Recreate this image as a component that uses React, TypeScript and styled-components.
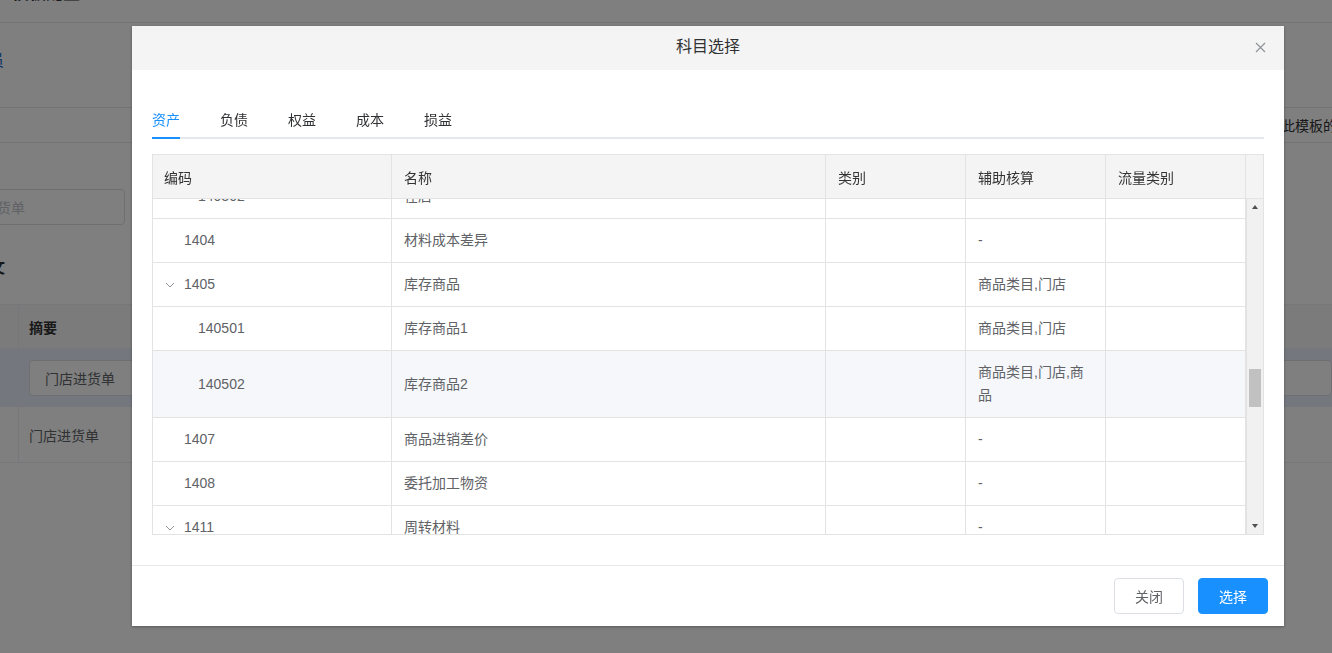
import React from 'react';
import styled, { createGlobalStyle } from 'styled-components';

const GlobalStyle = createGlobalStyle`
  html, body {
    margin: 0;
    padding: 0;
    overflow: hidden;
  }
  body {
    font-family: 'Liberation Sans', 'Noto Sans CJK SC', sans-serif;
    font-size: 14px;
    color: #606266;
  }
  * {
    box-sizing: border-box;
  }
`;

type Account = {
  code: string;
  name: string;
  level: number;
  expand?: boolean;
  aux: string;
  hover?: boolean;
};

const accounts: Account[] = [
  { code: '140302', name: '在店', level: 2, aux: '' },
  { code: '1404', name: '材料成本差异', level: 1, aux: '-' },
  { code: '1405', name: '库存商品', level: 1, expand: true, aux: '商品类目,门店' },
  { code: '140501', name: '库存商品1', level: 2, aux: '商品类目,门店' },
  { code: '140502', name: '库存商品2', level: 2, aux: '商品类目,门店,商品', hover: true },
  { code: '1407', name: '商品进销差价', level: 1, aux: '-' },
  { code: '1408', name: '委托加工物资', level: 1, aux: '-' },
  { code: '1411', name: '周转材料', level: 1, expand: true, aux: '-' },
];

const tabs = ['资产', '负债', '权益', '成本', '损益'];

const COLUMNS = '239px 434px 140px 140px 140px 17px';

const ChevronDown = () => (
  <svg width="10" height="6" viewBox="0 0 10 6">
    <polyline points="1,1 5,5 9,1" fill="none" stroke="#909399" strokeWidth="1" />
  </svg>
);

const CloseIcon = () => (
  <svg width="11" height="11" viewBox="0 0 11 11">
    <path d="M1 1 L10 10 M10 1 L1 10" stroke="#909399" strokeWidth="1.2" />
  </svg>
);

const BackgroundPage = () => (
  <Page>
    <PageHeader>
      <PageTitle>模板配置</PageTitle>
    </PageHeader>
    <InfoBlock>
      <ClippedLabel>人员</ClippedLabel>
    </InfoBlock>
    <BorderRow>此模板的单据</BorderRow>
    <InputRow>
      <FakeInput>门店进货单</FakeInput>
    </InputRow>
    <SectionTitle>正文</SectionTitle>
    <BgTable>
      <BgHeader>
        <BgIndexCell />
        <BgHeadCell>摘要</BgHeadCell>
      </BgHeader>
      <BgRow active={1} height={58}>
        <BgIndexCell />
        <BgCell>
          <CellInput>门店进货单</CellInput>
        </BgCell>
      </BgRow>
      <BgRow active={0} height={56}>
        <BgIndexCell />
        <BgCell>门店进货单</BgCell>
      </BgRow>
    </BgTable>
  </Page>
);

export default function App() {
  return (
    <>
      <GlobalStyle />
      <BackgroundPage />
      <Overlay>
        <Modal>
          <ModalHeader>
            <ModalTitle>科目选择</ModalTitle>
            <CloseButton>
              <CloseIcon />
            </CloseButton>
          </ModalHeader>
          <ModalBody>
            <TabNav>
              {tabs.map((t, i) => (
                <TabItem key={t}>
                  <TabLabel active={i === 0 ? 1 : 0}>{t}</TabLabel>
                </TabItem>
              ))}
            </TabNav>
            <Table>
              <HeadRow>
                <HeadCell>编码</HeadCell>
                <HeadCell>名称</HeadCell>
                <HeadCell>类别</HeadCell>
                <HeadCell>辅助核算</HeadCell>
                <HeadCell>流量类别</HeadCell>
                <HeadCell />
              </HeadRow>
              <TableBody>
                <RowsViewport>
                  <RowsScroller style={{ marginTop: -24 }}>
                    {accounts.map((a) => (
                      <BodyRow key={a.code} hover={a.hover ? 1 : 0}>
                        <BodyCell>
                          <CodeWrap level={a.level}>
                            <ExpandSlot>{a.expand && <ChevronDown />}</ExpandSlot>
                            {a.code}
                          </CodeWrap>
                        </BodyCell>
                        <BodyCell>{a.name}</BodyCell>
                        <BodyCell />
                        <BodyCell>
                          <CellText>{a.aux}</CellText>
                        </BodyCell>
                        <BodyCell />
                      </BodyRow>
                    ))}
                  </RowsScroller>
                </RowsViewport>
                <ScrollTrack>
                  <ArrowUp />
                  <ThumbArea>
                    <Thumb />
                  </ThumbArea>
                  <ArrowDown />
                </ScrollTrack>
              </TableBody>
            </Table>
          </ModalBody>
          <ModalFooter>
            <Button variant="default">关闭</Button>
            <Button variant="primary">选择</Button>
          </ModalFooter>
        </Modal>
      </Overlay>
    </>
  );
}

/* background page */

const Page = styled.div`
  width: 100vw;
  height: 100vh;
  background: #fff;
  color: #303133;
  overflow: hidden;
`;

const PageHeader = styled.div`
  height: 23px;
  border-bottom: 1px solid #e8e8e8;
  overflow: hidden;
  padding-left: 12px;
`;

const PageTitle = styled.div`
  font-size: 17px;
  font-weight: bold;
  line-height: 20px;
  margin-top: -16px;
`;

const InfoBlock = styled.div`
  height: 84px;
  padding-top: 24px;
`;

const ClippedLabel = styled.div`
  margin-left: -28px;
  font-size: 16px;
  color: #1f6fd1;
`;

const BorderRow = styled.div`
  height: 36px;
  border-top: 1px solid #e8e8e8;
  border-bottom: 1px solid #e8e8e8;
  display: flex;
  align-items: center;
  padding-left: 1281px;
  white-space: nowrap;
  font-size: 14px;
  color: #303133;
`;

const InputRow = styled.div`
  height: 83px;
  padding-top: 46px;
`;

const FakeInput = styled.div`
  width: 186px;
  height: 36px;
  margin-left: -61px;
  border: 1px solid #dcdfe6;
  border-radius: 4px;
  padding-left: 15px;
  display: flex;
  align-items: center;
  color: #c0c4cc;
  white-space: nowrap;
`;

const SectionTitle = styled.div`
  height: 78px;
  padding-top: 28px;
  margin-left: -27px;
  font-size: 16px;
  font-weight: bold;
`;

const BgTable = styled.div`
  border-top: 1px solid #ebeef5;
`;

const BgHeader = styled.div`
  display: flex;
  height: 44px;
  background: #f7f7f7;
  border-bottom: 1px solid #ebeef5;
`;

const BgIndexCell = styled.div`
  width: 19px;
  border-right: 1px solid #ebeef5;
`;

const BgHeadCell = styled.div`
  padding-left: 10px;
  display: flex;
  align-items: center;
  font-weight: bold;
  color: #303133;
`;

const BgRow = styled.div<{ active: number; height: number }>`
  display: flex;
  height: ${(p) => p.height}px;
  border-bottom: 1px solid #ebeef5;
  background: ${(p) => (p.active ? '#e8f0fc' : '#fff')};
`;

const BgCell = styled.div`
  flex: 1;
  display: flex;
  align-items: center;
  padding-left: 10px;
  color: #606266;
`;

const CellInput = styled.div`
  width: 100%;
  height: 36px;
  background: #fff;
  border: 1px solid #dcdfe6;
  border-radius: 4px;
  padding-left: 15px;
  display: flex;
  align-items: center;
  color: #606266;
`;

/* modal */

const Overlay = styled.div`
  position: fixed;
  inset: 0;
  background: rgba(0, 0, 0, 0.5);
  display: flex;
  align-items: flex-start;
  padding: 26px 0 0 132px;
`;

const Modal = styled.div`
  width: 1152px;
  flex-shrink: 0;
  background: #fff;
  box-shadow: 0 1px 3px rgba(0, 0, 0, 0.3);
  display: flex;
  flex-direction: column;
`;

const ModalHeader = styled.div`
  height: 44px;
  background: #f4f4f4;
  display: flex;
  align-items: center;
  justify-content: center;
  position: relative;
`;

const ModalTitle = styled.span`
  font-size: 16px;
  line-height: 20px;
  margin-top: -2px;
  color: #303133;
`;

const CloseButton = styled.span`
  position: absolute;
  right: 18px;
  top: 16px;
  display: flex;
  cursor: pointer;
`;

const ModalBody = styled.div`
  padding: 29px 20px 30px;
`;

const TabNav = styled.div`
  display: flex;
  height: 40px;
  box-shadow: inset 0 -2px 0 #e4e7ed;
  margin-bottom: 15px;
`;

const TabItem = styled.div`
  display: flex;
  padding: 0 20px;

  &:first-child {
    padding-left: 0;
  }
`;

const TabLabel = styled.span<{ active: number }>`
  display: flex;
  align-items: center;
  padding-top: 2px;
  font-size: 14px;
  color: ${(p) => (p.active ? '#1890ff' : '#303133')};
  border-bottom: 2px solid ${(p) => (p.active ? '#1890ff' : 'transparent')};
  cursor: pointer;
`;

const Table = styled.div`
  width: 1112px;
  height: 381px;
  border: 1px solid #e3e3e3;
  display: flex;
  flex-direction: column;
`;

const HeadRow = styled.div`
  display: grid;
  grid-template-columns: ${COLUMNS};
  height: 44px;
  flex-shrink: 0;
  background: #f4f4f4;
  border-bottom: 1px solid #e3e3e3;
`;

const HeadCell = styled.div`
  display: flex;
  align-items: center;
  padding: 0 12px;
  font-size: 14px;
  color: #333;
  border-right: 1px solid #e3e3e3;

  &:first-child {
    padding-left: 11px;
  }

  &:last-child {
    border-right: none;
  }
`;

const TableBody = styled.div`
  flex: 1;
  display: flex;
  min-height: 0;
`;

const RowsViewport = styled.div`
  flex: 1;
  overflow: hidden;
`;

const RowsScroller = styled.div`
  display: flex;
  flex-direction: column;
`;

const BodyRow = styled.div<{ hover: number }>`
  display: grid;
  grid-template-columns: 239px 434px 140px 140px 140px;
  border-bottom: 1px solid #e3e3e3;
  background: ${(p) => (p.hover ? '#f5f7fa' : '#fff')};
`;

const BodyCell = styled.div`
  display: flex;
  align-items: center;
  padding: 10px 12px;
  line-height: 23px;
  font-size: 14px;
  color: #606266;
  border-right: 1px solid #e3e3e3;
  min-height: 43px;

  &:first-child {
    padding-left: 11px;
  }
`;

const CellText = styled.span`
  display: block;
`;

const CodeWrap = styled.div<{ level: number }>`
  display: flex;
  align-items: center;
  padding-left: ${(p) => (p.level - 1) * 14}px;
`;

const ExpandSlot = styled.span`
  width: 20px;
  display: flex;
  align-items: center;
  padding-left: 1px;
`;

const ScrollTrack = styled.div`
  width: 17px;
  background: #f1f1f1;
  border-left: 1px solid #e3e3e3;
  display: flex;
  flex-direction: column;
  align-items: center;
`;

const ArrowUp = styled.div`
  margin-top: 6px;
  width: 0;
  height: 0;
  border-left: 3.5px solid transparent;
  border-right: 3.5px solid transparent;
  border-bottom: 4px solid #505050;
`;

const ThumbArea = styled.div`
  flex: 1;
  width: 100%;
  padding: 0 2px;
  padding-top: 160px;
`;

const Thumb = styled.div`
  height: 38px;
  background: #c1c1c1;
`;

const ArrowDown = styled.div`
  margin-bottom: 6px;
  width: 0;
  height: 0;
  border-left: 3.5px solid transparent;
  border-right: 3.5px solid transparent;
  border-top: 4px solid #505050;
`;

const ModalFooter = styled.div`
  border-top: 1px solid #e8e8e8;
  padding: 12px 16px;
  display: flex;
  justify-content: flex-end;
  gap: 14px;
`;

const Button = styled.button<{ variant: 'default' | 'primary' }>`
  width: 70px;
  height: 36px;
  border-radius: 4px;
  font-family: inherit;
  font-size: 14px;
  cursor: pointer;
  border: 1px solid ${(p) => (p.variant === 'primary' ? '#1890ff' : '#dcdfe6')};
  background: ${(p) => (p.variant === 'primary' ? '#1890ff' : '#fff')};
  color: ${(p) => (p.variant === 'primary' ? '#fff' : '#606266')};
`;
